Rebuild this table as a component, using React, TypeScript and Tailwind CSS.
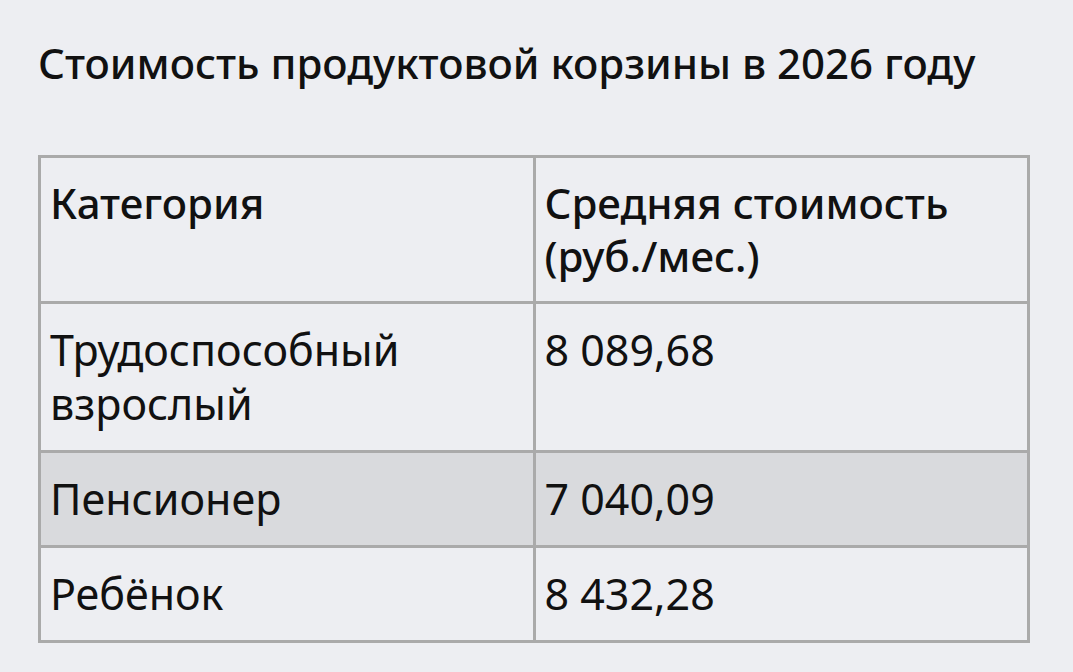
import React from "react";

const rows = [
  { cat: "Трудоспособный взрослый", val: "8 089,68", shade: false },
  { cat: "Пенсионер", val: "7 040,09", shade: true },
  { cat: "Ребёнок", val: "8 432,28", shade: false },
];

export default function App() {
  return (
    <div
      className="min-h-[672px] w-full bg-[#edeef2] pl-[38px] pt-[33px] text-[#111111]"
      style={{ fontFamily: '"Noto Sans", "DejaVu Sans", sans-serif' }}
    >
      <h1 className="m-0 text-[42px] font-medium leading-[60px]">
        Стоимость продуктовой корзины в 2026 году
      </h1>
      <table className="mt-[62px] w-[992px] table-fixed border-collapse border-[3px] border-[#aaaaaa] text-[43px] leading-[54px]">
        <thead>
          <tr>
            <th className="border-[3px] border-[#aaaaaa] px-[9px] py-[19px] text-left align-top text-[42px] font-medium leading-[52.5px]">
              Категория
            </th>
            <th className="border-[3px] border-[#aaaaaa] px-[9px] py-[19px] text-left align-top text-[42px] font-medium leading-[52.5px]">
              Средняя стоимость (руб./мес.)
            </th>
          </tr>
        </thead>
        <tbody>
          {rows.map((r) => (
            <tr key={r.cat} className={r.shade ? "bg-[#d9dadd]" : ""}>
              <td className="border-[3px] border-[#aaaaaa] px-[9px] py-[19px] align-top">
                {r.cat}
              </td>
              <td className="border-[3px] border-[#aaaaaa] px-[9px] py-[19px] align-top">
                {r.val}
              </td>
            </tr>
          ))}
        </tbody>
      </table>
    </div>
  );
}
